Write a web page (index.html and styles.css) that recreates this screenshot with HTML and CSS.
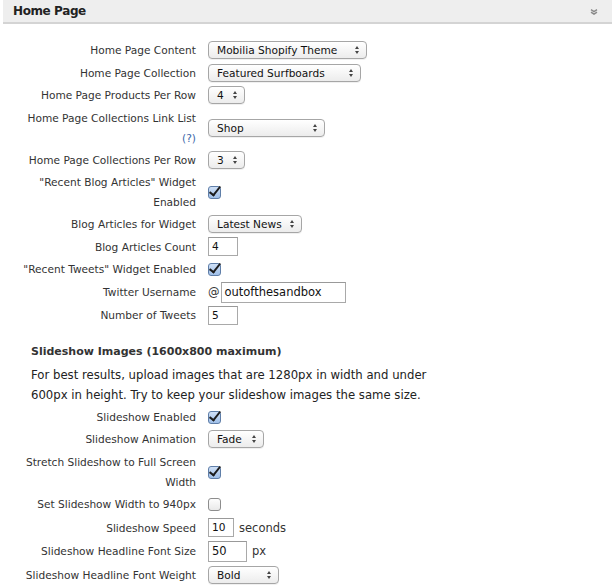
FILE: index.html
```html
<!DOCTYPE html>
<html>
<head>
<meta charset="utf-8">
<link rel="stylesheet" href="styles.css">
</head>
<body>
<div class="panel-head">
  <h2 class="panel-title">Home Page</h2>
  <svg class="chev" width="8" height="6" viewBox="0 0 8 6"><path d="M1 0.6 L4 2.6 L7 0.6 M1 3.2 L4 5.2 L7 3.2" fill="none" stroke="#8a8a8a" stroke-width="1.4"/></svg>
</div>

<div class="form">
  <div class="row"><label class="lbl">Home Page Content</label><div class="ctl"><span class="sel" style="width:159px">Mobilia Shopify Theme<i class="arr"></i></span></div></div>
  <div class="row"><label class="lbl">Home Page Collection</label><div class="ctl"><span class="sel" style="width:153px">Featured Surfboards<i class="arr"></i></span></div></div>
  <div class="row"><label class="lbl">Home Page Products Per Row</label><div class="ctl"><span class="sel" style="width:37px">4<i class="arr"></i></span></div></div>
  <div class="row"><label class="lbl">Home Page Collections Link List<br><a class="help">(?)</a></label><div class="ctl"><span class="sel" style="width:117px">Shop<i class="arr"></i></span></div></div>
  <div class="row"><label class="lbl">Home Page Collections Per Row</label><div class="ctl"><span class="sel" style="width:37px">3<i class="arr"></i></span></div></div>
  <div class="row"><label class="lbl">"Recent Blog Articles" Widget<br>Enabled</label><div class="ctl"><span class="cb on"></span></div></div>
  <div class="row"><label class="lbl">Blog Articles for Widget</label><div class="ctl"><span class="sel" style="width:94px">Latest News<i class="arr"></i></span></div></div>
  <div class="row"><label class="lbl">Blog Articles Count</label><div class="ctl"><span class="inp" style="width:30px">4</span></div></div>
  <div class="row"><label class="lbl">"Recent Tweets" Widget Enabled</label><div class="ctl"><span class="cb on"></span></div></div>
  <div class="row tall"><label class="lbl">Twitter Username</label><div class="ctl"><span class="at">@</span><span class="inp big" style="width:125px">outofthesandbox</span></div></div>
  <div class="row"><label class="lbl">Number of Tweets</label><div class="ctl"><span class="inp" style="width:30px">5</span></div></div>

  <h3 class="sect">Slideshow Images (1600x800 maximum)</h3>
  <p class="note">For best results, upload images that are 1280px in width and under 600px in height. Try to keep your slideshow images the same size.</p>

  <div class="row"><label class="lbl">Slideshow Enabled</label><div class="ctl"><span class="cb on"></span></div></div>
  <div class="row"><label class="lbl">Slideshow Animation</label><div class="ctl"><span class="sel" style="width:56px">Fade<i class="arr"></i></span></div></div>
  <div class="row"><label class="lbl">Stretch Slideshow to Full Screen<br>Width</label><div class="ctl"><span class="cb on"></span></div></div>
  <div class="row tall"><label class="lbl">Set Slideshow Width to 940px</label><div class="ctl"><span class="cb"></span></div></div>
  <div class="row tall"><label class="lbl">Slideshow Speed</label><div class="ctl"><span class="inp" style="width:26px">10</span><span class="unit">seconds</span></div></div>
  <div class="row tall"><label class="lbl">Slideshow Headline Font Size</label><div class="ctl"><span class="inp big" style="width:39px">50</span><span class="unit">px</span></div></div>
  <div class="row tall"><label class="lbl">Slideshow Headline Font Weight</label><div class="ctl"><span class="sel" style="width:71px">Bold<i class="arr"></i></span></div></div>
</div>
</body>
</html>
```
FILE: styles.css
```css
html, body {
  margin: 0;
  padding: 0;
  background: #fff;
}
body {
  font-family: "DejaVu Sans", "Lucida Grande", sans-serif;
  font-size: 10.6px;
  color: #333;
}
.panel-head {
  margin-left: 3px;
  height: 22px;
  background: #eeeeee;
  border-bottom: 2px solid #d4d4d4;
  display: flex;
  align-items: center;
  justify-content: space-between;
  padding: 0 14px 0 10px;
}
.panel-title {
  margin: 0;
  font-size: 12px;
  letter-spacing: -0.4px;
  font-weight: bold;
  color: #222;
}
.chev { display: block; margin-top: 1px; }
.form {
  padding: 16px 0 0 0;
  display: flex;
  flex-direction: column;
  gap: 2px;
}
.row {
  display: grid;
  grid-template-columns: 196px auto;
  column-gap: 12px;
  align-items: center;
  min-height: 20.5px;
}
.row.tall { min-height: 21.5px; }
.lbl {
  text-align: right;
  line-height: 20px;
}
.help { color: #3a66a8; }
.ctl {
  display: flex;
  align-items: center;
}
.sel {
  position: relative;
  box-sizing: border-box;
  height: 18px;
  line-height: 16px;
  padding-left: 8px;
  border: 1px solid #a6a6a6;
  border-radius: 4px;
  background: linear-gradient(#ffffff, #ececec);
  color: #111;
  white-space: nowrap;
  box-shadow: 0 1px 0 rgba(0,0,0,0.06);
}
.arr {
  position: absolute;
  right: 7px;
  top: 4px;
  width: 0;
  height: 0;
  border-left: 2.5px solid transparent;
  border-right: 2.5px solid transparent;
  border-bottom: 3px solid #444;
}
.arr::after {
  content: "";
  position: absolute;
  left: -2.5px;
  top: 5px;
  border-left: 2.5px solid transparent;
  border-right: 2.5px solid transparent;
  border-top: 3px solid #444;
}
.inp {
  box-sizing: border-box;
  height: 19px;
  line-height: 17px;
  border: 1px solid #a9a9a9;
  border-top-color: #999;
  padding-left: 3px;
  color: #111;
  background: #fff;
}
.inp.big { height: 21px; line-height: 19px; font-size: 11.5px; }
.at { margin-right: 1px; font-size: 11.5px; }
.unit { margin-left: 5px; font-size: 11.5px; }
.cb {
  box-sizing: border-box;
  width: 13px;
  height: 13px;
  border: 1px solid #8d8d8d;
  border-radius: 3px;
  background: linear-gradient(#fdfdfd, #e9e9e9);
  position: relative;
  margin-top: 1px;
}
.cb.on {
  background: linear-gradient(#cfe0f6, #9fbfe8);
  border-color: #5f7ea8;
}
.cb.on::after {
  content: "";
  position: absolute;
  left: 3px;
  top: -3px;
  width: 4px;
  height: 10px;
  border-right: 2.5px solid #1c1c1c;
  border-bottom: 2.5px solid #1c1c1c;
  transform: rotate(38deg);
}
.sect {
  margin: 14px 0 0 31px;
  font-size: 11px;
  font-weight: bold;
  line-height: 20px;
  color: #333;
}
.note {
  margin: 1px 0 0 31px;
  width: 420px;
  font-size: 11.7px;
  line-height: 20px;
  color: #222;
}
```
